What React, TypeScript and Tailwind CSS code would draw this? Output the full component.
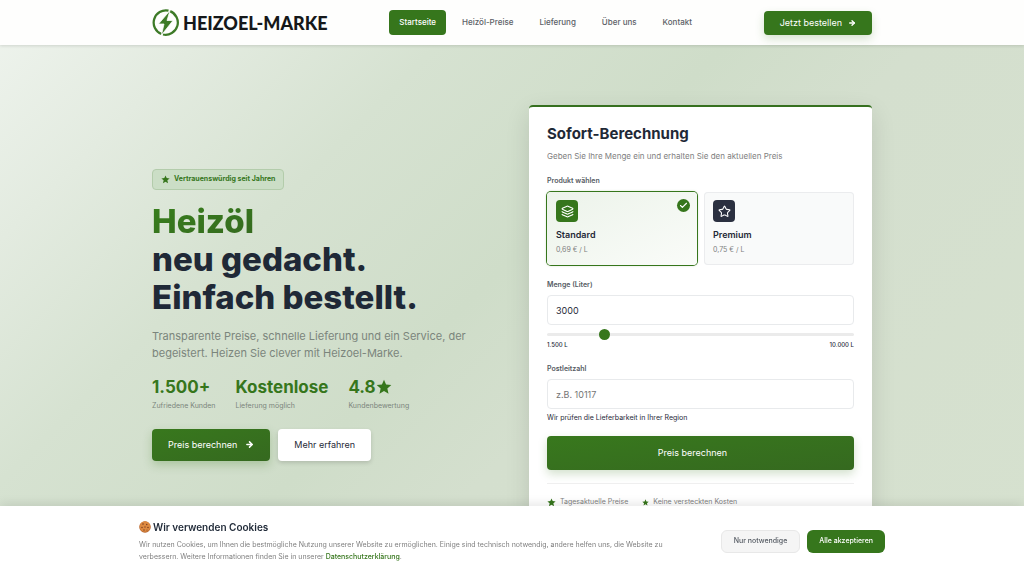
import React, { useState } from 'react';
import { ArrowRight, Check, Layers, Star } from 'lucide-react';

const navItems = [
  { label: 'Startseite', active: true },
  { label: 'Heizöl-Preise', active: false },
  { label: 'Lieferung', active: false },
  { label: 'Über uns', active: false },
  { label: 'Kontakt', active: false },
];

const stats = [
  { value: '1.500+', label: 'Zufriedene Kunden' },
  { value: 'Kostenlose', label: 'Lieferung möglich' },
  { value: '4.8', label: 'Kundenbewertung', star: true },
];

const products = [
  { id: 'standard', name: 'Standard', price: '0,69 € / L', icon: Layers },
  { id: 'premium', name: 'Premium', price: '0,75 € / L', icon: Star },
];

const StarIcon = ({ className }: { className?: string }) => (
  <svg viewBox="0 0 24 24" className={className} fill="currentColor" aria-hidden="true">
    <path d="M12 1l3.1 7.3 7.9.7-6 5.2 1.8 7.8L12 17.9 5.2 22 7 14.2 1 9l7.9-.7z" />
  </svg>
);

const CookieIcon = () => (
  <svg viewBox="0 0 24 24" className="size-3" aria-hidden="true">
    <circle cx="12" cy="12" r="11.5" fill="#b5622b" />
    <circle cx="12" cy="11" r="10.5" fill="#dd8a41" />
    <g fill="#7d3f22">
      <circle cx="8" cy="6" r="1.6" />
      <circle cx="15.5" cy="7" r="1.5" />
      <circle cx="6" cy="13" r="1.5" />
      <circle cx="12" cy="12" r="1.4" />
      <circle cx="18" cy="13" r="1.6" />
      <circle cx="10" cy="18" r="1.5" />
      <circle cx="16" cy="18" r="1.1" />
    </g>
  </svg>
);

const Logo = () => (
  <a href="#" className="flex items-center gap-1">
    <svg viewBox="0 0 54 54" className="size-[27px]" aria-hidden="true">
      <g fill="none" stroke="#3d7a27" strokeWidth="4.5">
        <path d="M33 3.2A24.5 24.5 0 0 0 19 50" />
        <path d="M36 4.2A24.5 24.5 0 0 1 22 51" />
      </g>
      <path d="M36 3L13 30h11l-5 22 23-29H30z" fill="#3d7a27" stroke="#fff" strokeWidth="1.5" />
    </svg>
    <span className="font-[Lato,sans-serif] text-[18px] leading-none font-black text-[#15181a]">
      HEIZOEL-MARKE
    </span>
  </a>
);

const Header = () => (
  <header className="relative z-10 bg-[#fefefd] shadow-[0_1px_3px_rgba(0,0,0,0.12)]">
    <div className="mx-auto flex h-[45px] max-w-[752px] items-center justify-between px-4">
      <Logo />
      <nav className="flex gap-1.5">
        {navItems.map((item) => (
          <a
            key={item.label}
            href="#"
            className={
              item.active
                ? 'rounded-sm bg-[#36761c] px-2.5 py-1.5 text-[8px] leading-[13px] font-medium text-white'
                : 'rounded-sm px-2.5 py-1.5 text-[8px] leading-[13px] font-medium text-[#5b6066]'
            }
          >
            {item.label}
          </a>
        ))}
      </nav>
      <button className="flex h-6 items-center gap-1.5 rounded-sm bg-[#36761c] px-4 text-[9px] text-white shadow-[0_4px_10px_rgba(54,118,28,0.2)]">
        Jetzt bestellen
        <ArrowRight className="size-2" strokeWidth={4} />
      </button>
    </div>
  </header>
);

const HeroText = () => (
  <div>
    <span className="inline-flex h-[21px] items-center gap-1 rounded-sm border border-[#b3ccab] bg-[#cbdec6] px-2 text-[7px] font-bold text-[#36761c]">
      <StarIcon className="size-[9px]" />
      Vertrauenswürdig seit Jahren
    </span>
    <h1 className="mt-3 text-[33px] leading-[38px] font-extrabold text-[#1f2937]">
      <span className="bg-gradient-to-br from-[#38801c] to-[#35691f] bg-clip-text text-transparent">Heizöl</span>
      <br />
      neu gedacht.
      <br />
      Einfach bestellt.
    </h1>
    <p className="mt-3 max-w-[320px] text-[11px] leading-[17px] text-[#7b857c]">
      Transparente Preise, schnelle Lieferung und ein Service, der begeistert. Heizen Sie clever mit Heizoel-Marke.
    </p>
    <div className="mt-[15px] flex gap-5">
      {stats.map((stat) => (
        <div key={stat.label}>
          <div className="flex items-center text-[17px] leading-5 font-bold text-[#36761c]">
            {stat.value}
            {stat.star && <StarIcon className="size-4" />}
          </div>
          <div className="mt-1 text-[7px] leading-[10px] text-[#7b857c]">{stat.label}</div>
        </div>
      ))}
    </div>
    <div className="mt-[18px] flex gap-2">
      <button className="flex h-8 items-center gap-2 rounded-sm bg-gradient-to-br from-[#38781d] to-[#35691f] px-4 text-[9px] text-white shadow-[0_4px_10px_rgba(54,118,28,0.25)]">
        Preis berechnen
        <ArrowRight className="size-[9px]" strokeWidth={4} />
      </button>
      <button className="h-8 rounded-sm bg-white px-4 text-[9px] text-[#1f2937] shadow-[0_2px_4px_rgba(0,0,0,0.15)]">
        Mehr erfahren
      </button>
    </div>
  </div>
);

const Calculator = () => {
  const [product, setProduct] = useState('standard');
  const [amount, setAmount] = useState('3000');

  return (
    <form className="overflow-hidden rounded-sm border-t-2 border-[#36701f] bg-white px-[18px] pt-[17px] pb-[14px] shadow-[0_8px_24px_rgba(0,0,0,0.12)]">
      <h2 className="text-[15px] leading-5 font-bold text-[#1f2937]">Sofort-Berechnung</h2>
      <p className="mt-[6px] text-[8px] leading-3 text-[#808080]">
        Geben Sie Ihre Menge ein und erhalten Sie den aktuellen Preis
      </p>

      {/* Product selection */}
      <fieldset className="mt-3.5">
        <legend className="text-[7px] leading-[10px] font-semibold text-[#555b63]">Produkt wählen</legend>
        <div className="mt-[6px] grid grid-cols-2 gap-[7px]">
          {products.map((item) => {
            const IconComponent = item.icon;
            const selected = item.id === product;
            return (
              <label
                key={item.id}
                className={
                  selected
                    ? 'relative block rounded-sm bg-gradient-to-br from-[#ecf3ea] to-[#fafcf9] px-[9px] pt-2 pb-2.5 shadow-[0_0_3px_rgba(54,118,28,0.4)] ring-1 ring-[#36761c]'
                    : 'relative block rounded-sm bg-[#f9fafa] px-[9px] pt-2 pb-2.5 ring-1 ring-[#ebecee] ring-inset'
                }
              >
                <input
                  type="radio"
                  name="product"
                  className="sr-only"
                  checked={selected}
                  onChange={() => setProduct(item.id)}
                />
                <span
                  className={
                    item.id === 'standard'
                      ? 'flex size-[22px] items-center justify-center rounded-sm bg-[#36761c] text-white'
                      : 'flex size-[22px] items-center justify-center rounded-sm bg-[#2b3040] text-white'
                  }
                >
                  <IconComponent className="size-[13px]" strokeWidth={2} />
                </span>
                <span className="mt-[7px] block text-[9px] leading-3 font-semibold text-[#1f2937]">{item.name}</span>
                <span className="mt-1 block text-[7px] leading-[10px] text-[#808080]">{item.price}</span>
                {selected && (
                  <span className="absolute top-[7px] right-[7px] flex size-[13px] items-center justify-center rounded-full bg-[#36761c] text-white">
                    <Check className="size-[9px]" strokeWidth={3} />
                  </span>
                )}
              </label>
            );
          })}
        </div>
      </fieldset>

      {/* Amount */}
      <label htmlFor="amount" className="mt-[15px] block text-[7px] leading-[10px] font-semibold text-[#555b63]">
        Menge (Liter)
      </label>
      <input
        id="amount"
        type="text"
        value={amount}
        onChange={(e) => setAmount(e.target.value)}
        className="mt-[5px] block h-[30px] w-full rounded-sm border border-[#e8eaec] bg-white px-2 text-[9px] text-[#1f2937]"
      />
      <input
        type="range"
        aria-label="Menge"
        min="1500"
        max="10000"
        step="100"
        value={amount}
        onChange={(e) => setAmount(e.target.value)}
        className="mt-1 block h-[11px] w-full appearance-none bg-transparent [&::-webkit-slider-runnable-track]:h-[3px] [&::-webkit-slider-runnable-track]:rounded-full [&::-webkit-slider-runnable-track]:bg-[#ebebeb] [&::-webkit-slider-thumb]:-mt-1 [&::-webkit-slider-thumb]:size-[11px] [&::-webkit-slider-thumb]:appearance-none [&::-webkit-slider-thumb]:rounded-full [&::-webkit-slider-thumb]:bg-[#36761c]"
      />
      <div className="mt-px flex justify-between text-[6px] leading-2 font-medium text-[#1f2937]">
        <span>1.500 L</span>
        <span>10.000 L</span>
      </div>

      {/* Postcode */}
      <label htmlFor="postcode" className="mt-[15px] block text-[7px] leading-[10px] font-semibold text-[#555b63]">
        Postleitzahl
      </label>
      <input
        id="postcode"
        type="text"
        placeholder="z.B. 10117"
        className="mt-[5px] block h-[30px] w-full rounded-sm border border-[#e8eaec] bg-white px-2 text-[9px] text-[#1f2937] placeholder:text-[#757575]"
      />
      <p className="mt-[5px] text-[7px] leading-2 text-[#1f2937]">
        Wir prüfen die Lieferbarkeit in Ihrer Region
      </p>
      <button
        type="button"
        className="mt-[14px] h-[34px] w-full rounded-sm bg-gradient-to-br from-[#38781d] to-[#35691f] pr-4 text-[9px] text-white shadow-[0_4px_10px_rgba(54,118,28,0.22)]"
      >
        Preis berechnen
      </button>
      <div className="mt-[13px] flex gap-3.5 border-t border-[#efefef] pt-[13px] text-[7px] leading-[10px] text-[#808080]">
        <span className="flex items-center gap-1">
          <StarIcon className="size-[9px] text-[#36761c]" />
          Tagesaktuelle Preise
        </span>
        <span className="flex items-center gap-1">
          <StarIcon className="size-[7px] text-[#36761c]" />
          Keine versteckten Kosten
        </span>
      </div>
    </form>
  );
};

const CookieBanner = () => (
  <div className="fixed inset-x-0 bottom-0 z-20 bg-white shadow-[0_-2px_10px_rgba(0,0,0,0.1)]">
    <div className="mx-auto flex max-w-[778px] items-center gap-6 px-4 py-[13px]">
      <div className="flex-1">
        <h3 className="flex items-center gap-0.5 text-[10px] leading-4 font-semibold text-[#1f2937]">
          <CookieIcon />
          Wir verwenden Cookies
        </h3>
        <p className="mt-1 text-[7px] leading-3 text-[#808080]">
          Wir nutzen Cookies, um Ihnen die bestmögliche Nutzung unserer Website zu ermöglichen. Einige sind technisch
          notwendig, andere helfen uns, die Website zu verbessern. Weitere Informationen finden Sie in unserer{' '}
          <a href="#" className="font-medium text-[#36761c]">
            Datenschutzerklärung
          </a>
          .
        </p>
      </div>
      <div className="flex gap-[7px]">
        <button className="h-[23px] rounded-md border border-[#e8e8e8] bg-[#f5f5f5] px-3 text-[7px] font-medium text-[#555b63]">
          Nur notwendige
        </button>
        <button className="h-[23px] rounded-md bg-[#36761c] px-3 text-[7px] font-medium text-white">
          Alle akzeptieren
        </button>
      </div>
    </div>
  </div>
);

const App = () => (
  <div className="min-h-screen bg-[linear-gradient(135deg,#eff4ee_0%,#e3ebe0_15%,#d6e2d1_30%,#cfddc9_48%,#d4dfce_60%,#d6e1cf_100%)] font-[Inter,sans-serif]">
    <Header />
    <main className="mx-auto grid max-w-[752px] grid-cols-2 items-center gap-[34px] px-4 py-[60px]">
      <HeroText />
      <Calculator />
    </main>
    <CookieBanner />
  </div>
);

export default App;
